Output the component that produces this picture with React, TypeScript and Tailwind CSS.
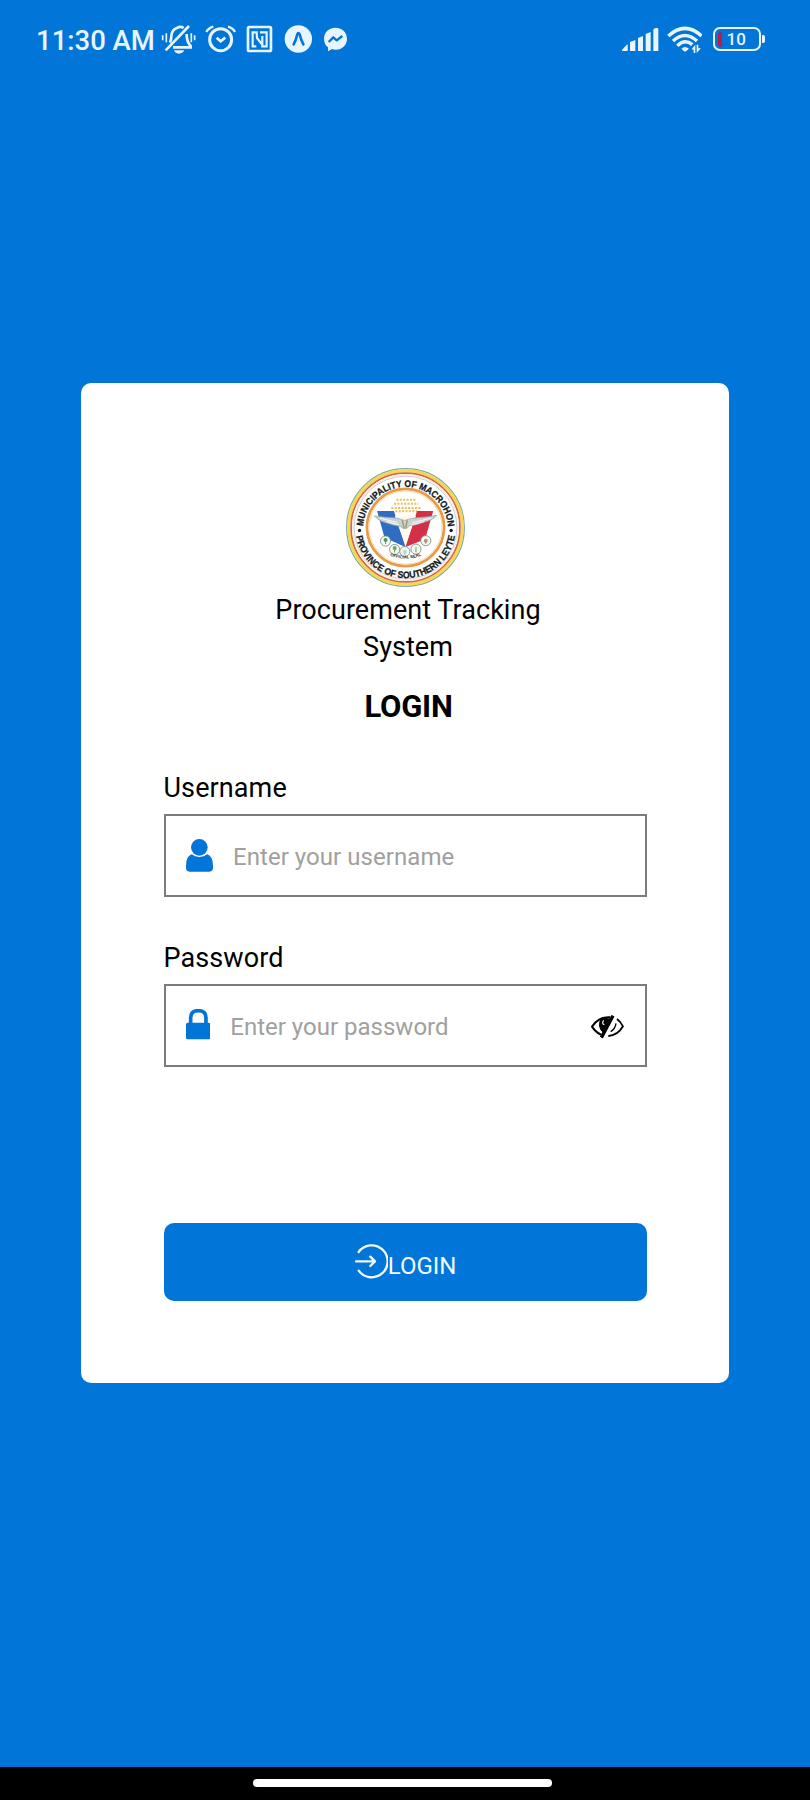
import React from "react";

function BellOff() {
  return (
    <svg viewBox="420 42 106 90" className="h-[30px] w-[35.3px]" fill="none" stroke="currentColor" strokeWidth="8">
      <path d="M434 121 L504 48" />
      <path d="M447 98 Q451 90 451 79 Q452 59 468 54 Q478 47 488 54 M497 72 Q497 96 509 108 V112 H456" />
      <path d="M459 121 H490 Q485 131 474 131 Q463 131 459 121Z" fill="currentColor" stroke="none" />
      <path d="M425 76 V91 M436 70 V97 M511 70 V97 M521 76 V91" strokeWidth="5" />
    </svg>
  );
}

function Alarm() {
  return (
    <svg viewBox="553 42 94 90" className="ml-[9px] h-[30px] w-[31.3px]" fill="none" stroke="currentColor" strokeWidth="9">
      <circle cx="600" cy="89" r="33" />
      <path d="M557 66 Q562 55 578 50 M643 66 Q638 55 622 50" strokeWidth="7" />
      <path d="M588 83 L600 94 L614 83" strokeWidth="8" />
    </svg>
  );
}

function Nfc() {
  return (
    <svg viewBox="678 42 82 90" className="ml-[10.3px] h-[30px] w-[27.3px]" fill="none" stroke="currentColor" strokeWidth="8">
      <rect x="684" y="51" width="69" height="72" rx="4" />
      <path d="M709 109 H698 V67 H710 L711 84 L726 103" strokeWidth="6.5" />
      <path d="M720 67 H740 V109 H727 V78" strokeWidth="6.5" />
    </svg>
  );
}

function ArrowBadge() {
  return (
    <svg viewBox="790 42 86 90" className="ml-[10px] h-[30px] w-[28.7px]">
      <circle cx="833" cy="87" r="41" fill="currentColor" />
      <path d="M819 103 Q827 88 830 73 Q833 66 837 73 Q840 88 848 103" fill="none" stroke="#0275d8" strokeWidth="8" strokeLinecap="round" strokeLinejoin="round" />
    </svg>
  );
}

function Messenger() {
  return (
    <svg viewBox="908 42 74 90" className="ml-[10.7px] h-[30px] w-[24.7px]">
      <path d="M945 53 C924 53 911 68 911 86 C911 97 915 106 923 112 V124 L935 117 Q940 119 945 119 C967 119 980 104 980 86 C980 68 967 53 945 53Z" fill="currentColor" />
      <path d="M925 96 L939 82 L949 91 L966 78" fill="none" stroke="#0275d8" strokeWidth="7" strokeLinejoin="round" />
    </svg>
  );
}

function Signal() {
  return (
    <svg viewBox="65 42 110 90" className="h-[30px] w-[36.7px]" fill="currentColor">
      <path d="M65 119 L82 102 V123 H68 Q64 123 65 119Z" />
      <path d="M89 96 L105 90 V123 H89Z" />
      <path d="M113 84 L128 78 V123 H113Z" />
      <path d="M136 72 L151 66 V123 H136Z" />
      <path d="M159 59 Q159 55 168 54 Q174 53 174 58 V123 H159Z" />
    </svg>
  );
}

function Wifi() {
  return (
    <svg viewBox="200 42 106 90" className="ml-[8.3px] h-[30px] w-[35.3px]" fill="none" stroke="currentColor" strokeWidth="10.5">
      <path d="M204 78 Q254 32 304 78 M218 93 Q254 60 290 93 M231 107 Q254 85 276 104" />
      <path d="M243 116 Q254 106 266 116 L257 124 Q254 127 251 124Z" fill="currentColor" stroke="none" />
      <path d="M274 118 L285 104 V129 H280 V119Z M289 104 V129 L302 115 H294 V104Z" fill="currentColor" stroke="none" />
    </svg>
  );
}

function Battery() {
  return (
    <div className="ml-[10.7px] flex items-center text-[#e6f5ff]">
      <div className="flex h-[24px] w-[48px] items-center rounded-[7px] border-[2.5px] border-current pl-[3px]">
        <span className="h-[15px] w-[4px] rounded-l-[3px] bg-[#b3204c]" />
        <span className="ml-[4.5px] text-[17px] leading-none font-medium">10</span>
      </div>
      <span className="ml-[1px] h-[8px] w-[3px] rounded-r-[2px] bg-current" />
    </div>
  );
}

const SUNS = [
  [185, 128, 242],
  [178, 140, 250],
  [170, 152, 256],
  [182, 162, 246],
];

const MEDALLIONS = [
  [153, 250],
  [180, 275],
  [210, 281],
  [243, 274],
  [272, 249],
];

function Seal() {
  return (
    <svg viewBox="36 34 352 352" className="h-[119px] w-[119px]" role="img">
      <defs>
        <path id="ringTop" d="M86 216 A126 126 0 1 1 338 216" />
        <path id="ringBottom" d="M64 212 A148 148 0 0 0 360 212" />
        <path id="ringInner" d="M150 286 Q212 318 274 286" />
      </defs>
      <circle cx="212" cy="210" r="174" fill="#fff" stroke="#7fb09a" strokeWidth="4" />
      <circle cx="212" cy="210" r="168" fill="none" stroke="#f6d558" strokeWidth="9" />
      <circle cx="212" cy="210" r="161" fill="none" stroke="#cf6a45" strokeWidth="5" />
      <circle cx="212" cy="210" r="156" fill="none" stroke="#fbeed0" strokeWidth="4" />
      <circle cx="212" cy="210" r="152" fill="none" stroke="#b9add0" strokeWidth="2" />
      <circle cx="212" cy="210" r="114" fill="none" stroke="#e99a45" strokeWidth="8" />
      <circle cx="212" cy="210" r="108" fill="none" stroke="#f9dcae" strokeWidth="3" />
      <g fill="#111820" stroke="#111820" strokeWidth="0.8" fontFamily="'Liberation Sans', sans-serif" fontWeight="700">
        <text fontSize="28">
          <textPath href="#ringTop" startOffset="10" textLength="378" lengthAdjust="spacingAndGlyphs">MUNICIPALITY OF MACROHON</textPath>
        </text>
        <text fontSize="28">
          <textPath href="#ringBottom" startOffset="24" textLength="418" lengthAdjust="spacingAndGlyphs">PROVINCE OF SOUTHERN LEYTE</textPath>
        </text>
      </g>
      <circle cx="76" cy="219" r="5" fill="#111820" />
      <circle cx="347" cy="219" r="5" fill="#111820" />
      <g stroke="#efbd55" strokeWidth="6" strokeDasharray="6 4">
        {SUNS.map(([x1, y, x2]) => (
          <path key={y} d={`M${x1} ${y} H${x2}`} />
        ))}
      </g>
      <path d="M128 161 H178 L212 268 L150 240Z" fill="#2f6dc0" />
      <path d="M246 161 H294 L270 245 L212 268Z" fill="#d42f45" />
      <path d="M180 176 H243 L212 262Z" fill="#fff9ec" />
      <path d="M120 176 Q150 180 177 181 Q198 184 209 189 Q222 184 245 181 Q275 180 305 174 Q290 190 268 194 Q245 204 224 205 Q211 221 198 207 Q176 205 157 197 Q136 193 120 176Z" fill="#c9d2d5" stroke="#8e9da3" strokeWidth="2" />
      <path d="M136 182 L188 195 M288 182 L232 196 M155 192 L192 202 M268 192 L228 203" stroke="#f5f8f8" strokeWidth="3" />
      <path d="M202 188 L208 212 M217 188 L213 211" stroke="#9b9a68" strokeWidth="4" />
      {MEDALLIONS.map(([x, y]) => (
        <g key={x}>
          <circle cx={x} cy={y} r="15" fill="#f6faf3" stroke="#788b83" strokeWidth="2.5" />
          <path d={`M${x} ${y + 9} V${y - 3}`} stroke="#739261" strokeWidth="3" />
        </g>
      ))}
      <circle cx="153" cy="247" r="6" fill="#4a9b54" />
      <circle cx="180" cy="271" r="6" fill="#62ad61" />
      <circle cx="210" cy="282" r="6" fill="#b8d8dc" />
      <circle cx="243" cy="271" r="4" fill="#c4d29b" />
      <circle cx="272" cy="249" r="6" fill="#b7967b" />
      <text fontFamily="'Liberation Sans', sans-serif" fontSize="13" fontWeight="700" fill="#333">
        <textPath href="#ringInner" startOffset="18" textLength="95">OFFICIAL SEAL</textPath>
      </text>
    </svg>
  );
}

function Person() {
  return (
    <svg viewBox="108 238 81 98" className="h-[32.7px] w-[27px]" fill="#0275d8">
      <circle cx="148" cy="263" r="25" />
      <path d="M125 284 Q136 292 148 292 Q161 292 172 284 Q189 290 189 318 V324 Q189 336 176 336 H121 Q108 336 108 324 V318 Q108 290 125 284Z" />
    </svg>
  );
}

function Lock() {
  return (
    <svg viewBox="108 238 73 91" className="mb-[2px] h-[30.3px] w-[24.3px]">
      <rect x="108" y="279" width="73" height="50" rx="5" fill="#0275d8" />
      <path d="M122 282 V265 Q122 243 145 243 Q168 243 168 265 V282" fill="none" stroke="#0275d8" strokeWidth="11" />
    </svg>
  );
}

function EyeOff() {
  return (
    <svg viewBox="63 137 99 70" className="mt-[3px] h-[23.3px] w-[33px]" fill="none" stroke="#000" strokeWidth="6">
      <path d="M121 144 Q86 141 66 172 Q77 189 93 196" />
      <path d="M141 149 Q151 156 159 171 Q143 199 115 200" strokeWidth="5.5" />
      <path d="M91 149 Q83 167 91 181 L99 190 L122 148 Q106 144 91 149Z" fill="#000" stroke="none" />
      <path d="M101 153 Q94 163 103 166" stroke="#fff" strokeWidth="3.5" />
      <path d="M129 139 L94 205" strokeWidth="10" />
      <path d="M138 162 Q136 178 122 187" strokeWidth="4" />
    </svg>
  );
}

function Enter() {
  return (
    <svg viewBox="103 103 100 104" className="mb-[1px] h-[34.7px] w-[33.3px]" fill="none" stroke="currentColor" strokeWidth="7" strokeLinecap="round" strokeLinejoin="round">
      <path d="M114 127 A48 48 0 1 1 114 183" />
      <path d="M106 155 H161 M149 141 L163 155 L149 169" />
    </svg>
  );
}

export default function App() {
  return (
    <div className="flex h-[1800px] w-[810px] flex-col bg-[#0275d8] font-[Roboto,sans-serif] text-black">
      <header className="flex h-[78px] shrink-0 items-center pr-[45px] pl-[36px] text-[#e6f5ff]">
        <span className="mt-[3px] w-[124.5px] text-[27.5px] leading-[32px] font-medium whitespace-nowrap">11:30 AM</span>
        <BellOff />
        <Alarm />
        <Nfc />
        <ArrowBadge />
        <Messenger />
        <div className="ml-auto flex items-center">
          <Signal />
          <Wifi />
          <Battery />
        </div>
      </header>

      <main className="mt-[305px] ml-[81px] flex h-[1000px] w-[648px] shrink-0 flex-col rounded-[10px] bg-white pt-[85px] pr-[82.5px] pl-[82.5px]">
        <div className="flex flex-col items-center text-center">
          <Seal />
          <h1 className="mt-[4.5px] ml-[6px] w-[290px] text-[27px] leading-[37px] tracking-[0.05px]">Procurement Tracking System</h1>
          <h2 className="mt-[21px] ml-[7px] text-[31px] leading-[40px] font-bold tracking-[-0.2px]">LOGIN</h2>
        </div>

        <div className="mt-[43px] text-[27px] leading-[36px] tracking-[0.1px]">Username</div>
        <div className="mt-[8.5px] flex h-[83px] items-center border-2 border-[#7c7c7c] pl-[20.5px] text-[#a0a0a0]">
          <Person />
          <span className="mt-[2px] ml-[20px] text-[24px] leading-[32px] tracking-[0.05px]">Enter your username</span>
        </div>

        <div className="mt-[43px] text-[27px] leading-[36px] tracking-[0.1px]">Password</div>
        <div className="mt-[8px] flex h-[83px] items-center border-2 border-[#7c7c7c] pr-[20.5px] pl-[20.5px] text-[#a0a0a0]">
          <Lock />
          <span className="mt-[2px] ml-[20px] flex-1 text-[24px] leading-[32px]">Enter your password</span>
          <EyeOff />
        </div>

        <button className="mt-[156px] flex h-[78px] items-center justify-center rounded-[10px] bg-[#0275d8] pl-[1px] text-[#f0faff]">
          <Enter />
          <span className="mt-[7px] text-[24px] leading-[32px]">LOGIN</span>
        </button>
      </main>

      <footer className="mt-auto flex h-[33px] shrink-0 justify-center bg-black pt-[12px] pr-[5px]">
        <div className="h-[8px] w-[299px] rounded-full bg-white" />
      </footer>
    </div>
  );
}
